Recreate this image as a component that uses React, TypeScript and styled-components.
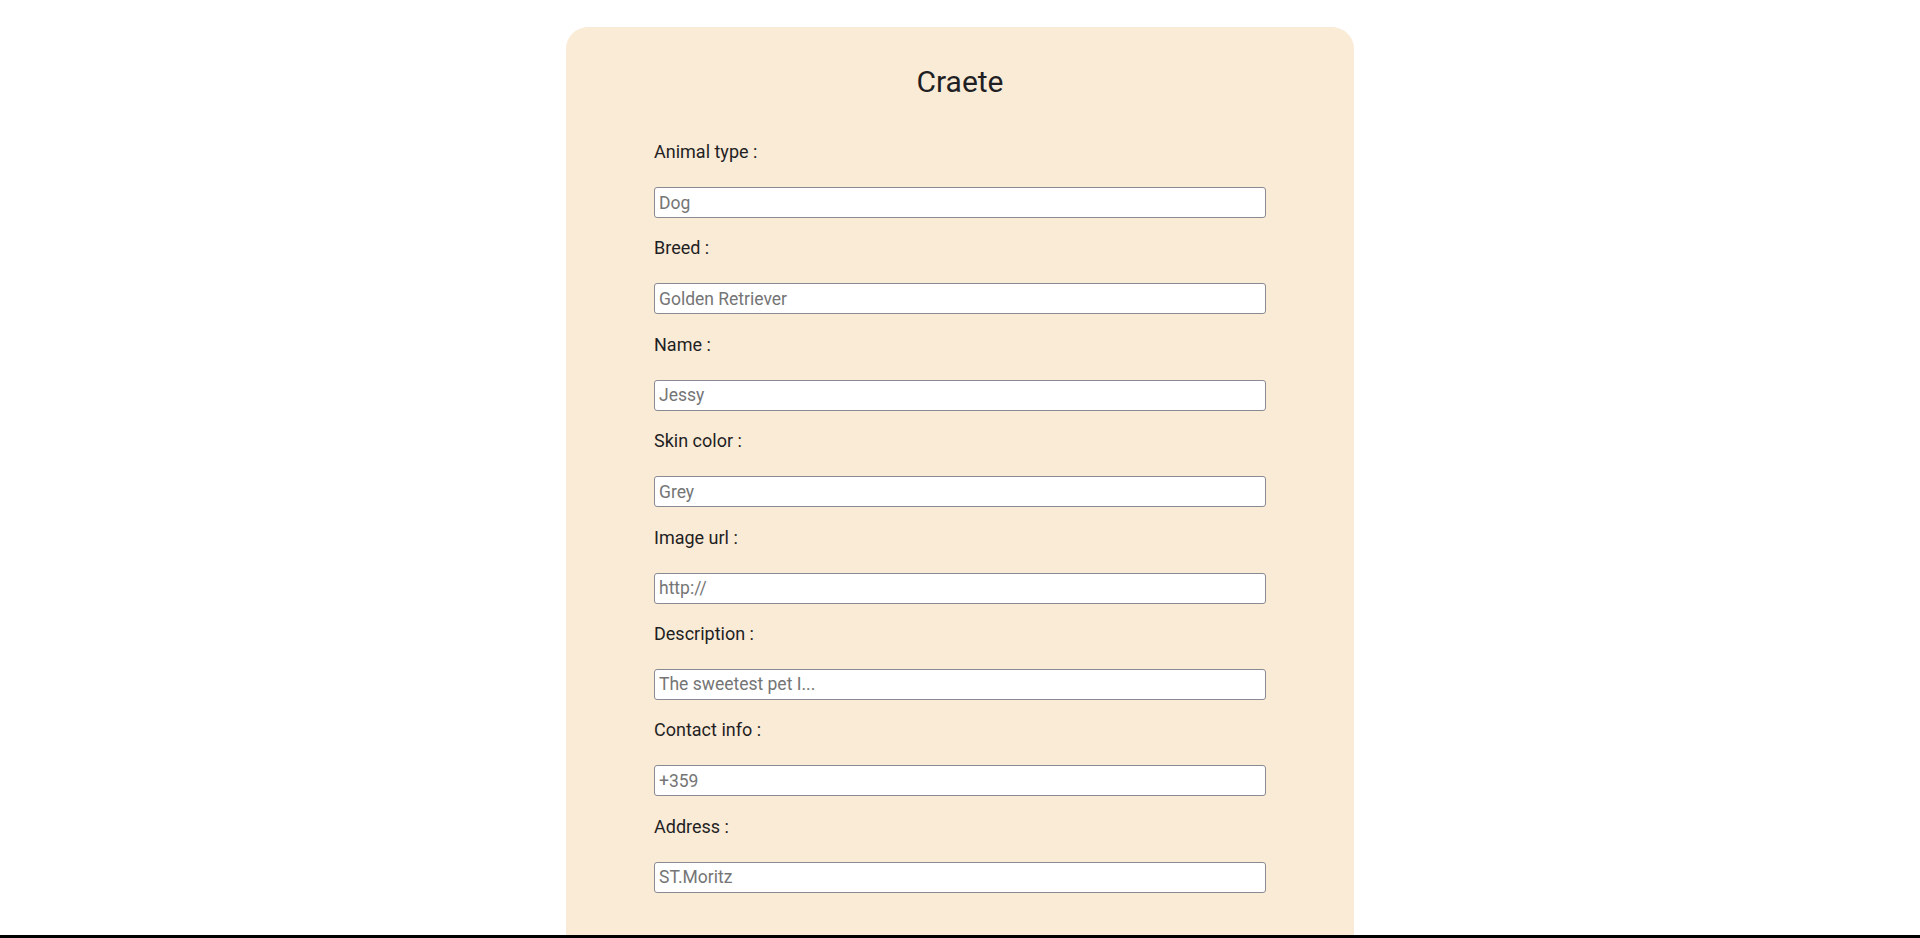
import React from "react";
import styled, { createGlobalStyle } from "styled-components";

const GlobalStyle = createGlobalStyle`
  html, body {
    margin: 0;
    padding: 0;
    background: #ffffff;
    font-family: Roboto, "Noto Sans", "Liberation Sans", sans-serif;
    color: #222222;
  }
  * { box-sizing: border-box; }
`;

const Page = styled.main`
  display: flex;
  flex-direction: column;
  min-height: 100vh;
`;

const Stage = styled.section`
  display: flex;
  justify-content: center;
  padding-top: 27px;
`;

const Card = styled.form`
  width: 788px;
  background: #faebd7;
  border-radius: 22px 22px 0 0;
  padding: 37px 88px 42px;
  display: flex;
  flex-direction: column;
`;

const Title = styled.h1`
  margin: 0;
  text-align: center;
  font-size: 30px;
  line-height: 35px;
  font-weight: 400;
  color: #1f1f24;
`;

const Fields = styled.div`
  margin-top: 42px;
  display: flex;
  flex-direction: column;
  gap: 19.4px;
`;

const Field = styled.div`
  display: flex;
  flex-direction: column;
  gap: 25px;
`;

const Label = styled.label`
  font-size: 18px;
  line-height: 21px;
  color: #1f1f24;
`;

const Input = styled.input`
  width: 100%;
  height: 31px;
  margin: 0;
  padding: 0 4px;
  border: 1px solid #8a8a92;
  border-radius: 3px;
  background: #ffffff;
  font-family: Roboto, "Noto Sans", "Liberation Sans", sans-serif;
  font-size: 17.5px;
  color: #222222;
  outline: none;
  &::placeholder {
    color: #757575;
  }
`;

const Footer = styled.footer`
  height: 60px;
  background: #000000;
`;

const fields = [
  { id: "type", label: "Animal type :", placeholder: "Dog" },
  { id: "breed", label: "Breed :", placeholder: "Golden Retriever" },
  { id: "name", label: "Name :", placeholder: "Jessy" },
  { id: "color", label: "Skin color :", placeholder: "Grey" },
  { id: "image", label: "Image url :", placeholder: "http://" },
  { id: "description", label: "Description :", placeholder: "The sweetest pet I..." },
  { id: "contact", label: "Contact info :", placeholder: "+359" },
  { id: "address", label: "Address :", placeholder: "ST.Moritz" },
];

export default function App() {
  return (
    <>
      <GlobalStyle />
      <Page>
        <Stage>
          <Card onSubmit={(e) => e.preventDefault()}>
            <Title>Craete</Title>
            <Fields>
              {fields.map((f) => (
                <Field key={f.id}>
                  <Label htmlFor={f.id}>{f.label}</Label>
                  <Input id={f.id} name={f.id} type="text" placeholder={f.placeholder} />
                </Field>
              ))}
            </Fields>
          </Card>
        </Stage>
        <Footer />
      </Page>
    </>
  );
}
